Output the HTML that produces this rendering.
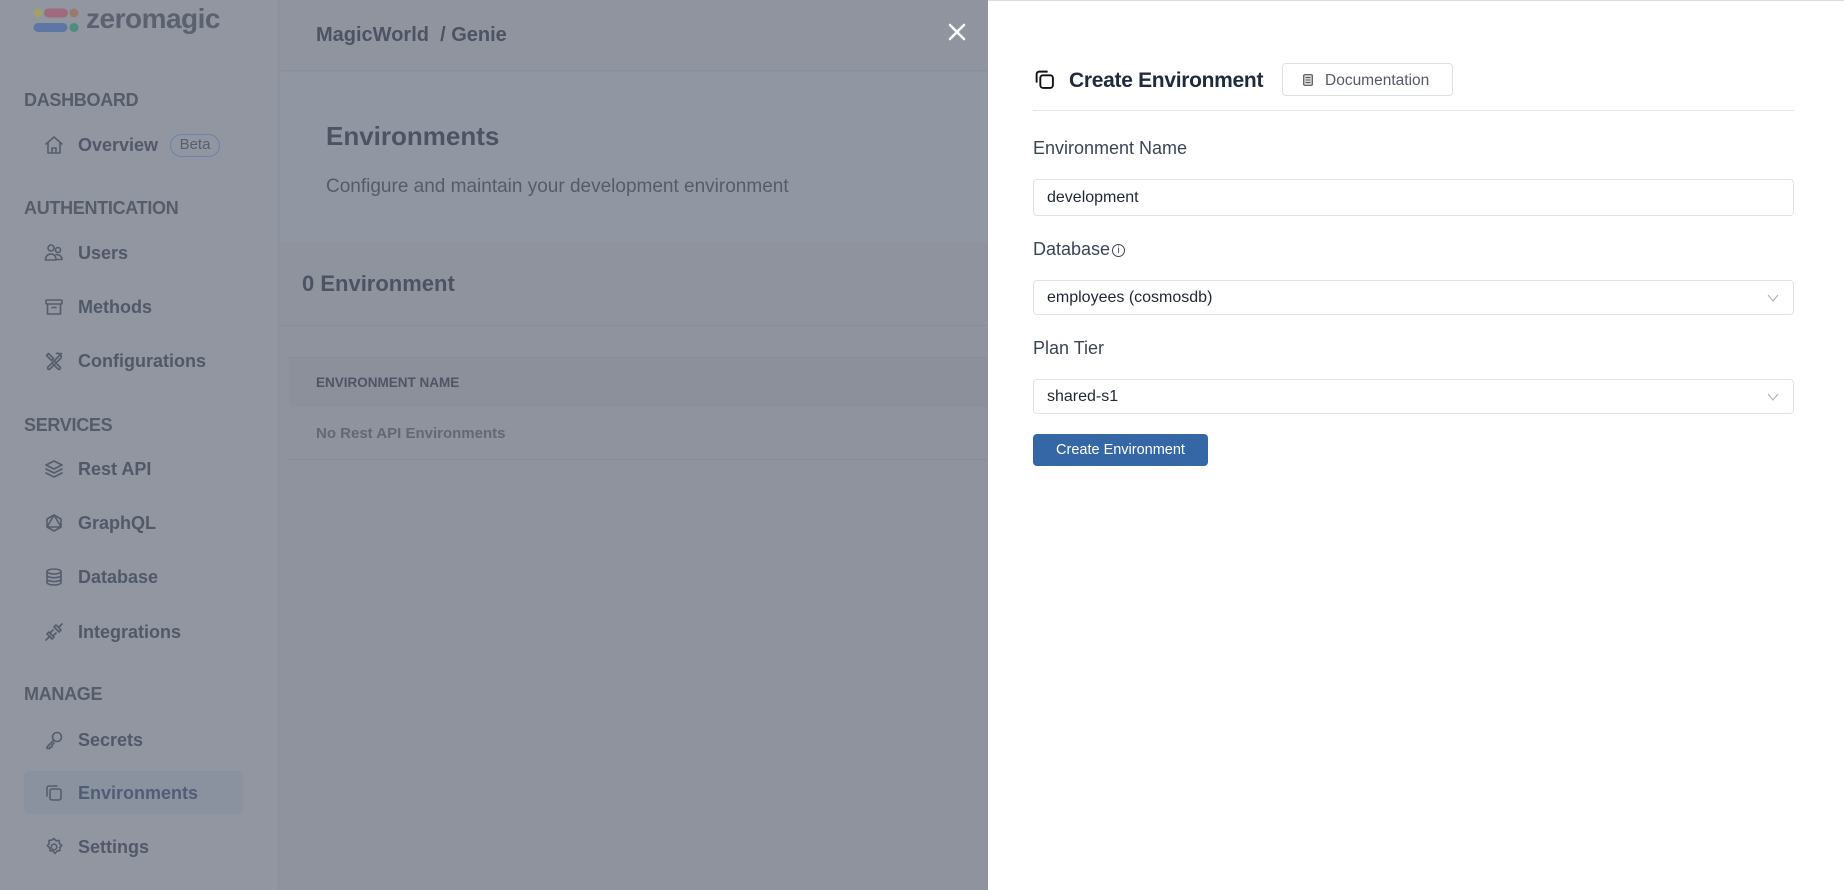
<!DOCTYPE html>
<html><head><meta charset="utf-8"><style>
*{box-sizing:border-box;margin:0;padding:0}
body{width:1844px;height:890px;overflow:hidden;font-family:"Liberation Sans",sans-serif;background:#8e939e;position:relative}
.a{position:absolute;white-space:nowrap}
.side{position:absolute;left:0;top:0;width:279px;height:890px;background:#9196a1;border-right:1px solid #8a909b}
.sec{position:absolute;left:24px;font-size:18px;color:#555c6a;font-weight:bold;letter-spacing:-0.3px}
.it{position:absolute;left:78px;font-size:18px;color:#515968;font-weight:bold;line-height:22px}
.ic{position:absolute;left:44px;width:20px;height:20px}
.ic *{fill:none;stroke:#555d6c;stroke-width:1.6;stroke-linecap:round;stroke-linejoin:round}
.main-t{color:#4c5362}
.lbl{position:absolute;left:1033px;font-size:18px;color:#3b4556}
.inp{position:absolute;left:1033px;width:761px;border:1px solid #dfe3e8;border-radius:4px;background:#fff;font-size:16px;color:#1f2733;padding-left:13px;display:flex;align-items:center}
.chev{position:absolute;right:14px;top:50%;width:12px;height:8px;margin-top:-4px}
</style></head><body>
<div class="side">
  <svg class="a" style="left:33px;top:8px" width="48" height="26" viewBox="0 0 48 26">
    <circle cx="5" cy="5" r="4.5" fill="#a3a06a"/>
    <rect x="11" y="0.5" width="24" height="9" rx="4.5" fill="#9e6b7e"/>
    <circle cx="41" cy="5" r="4.5" fill="#9a7a6e"/>
    <rect x="0.5" y="15" width="34" height="9" rx="4.5" fill="#5e76a4"/>
    <circle cx="41" cy="19.5" r="4.5" fill="#4f8a83"/>
  </svg>
  <div class="a" style="left:86px;top:3px;font-size:28px;color:#5b6170;font-weight:bold;letter-spacing:-0.5px">zeromagic</div>
  <div class="sec" style="top:90px">DASHBOARD</div>
  <svg class="ic" style="top:135px" viewBox="0 0 20 20"><path d="M2 9L10 2l8 7M4 7.5V18h12V7.5M8 18v-5h4v5"/></svg>
  <div class="it" style="top:134px">Overview</div>
  <div class="a" style="left:170px;top:134px;height:23px;width:50px;border:1.3px solid #6a84ae;border-radius:12px;font-size:15px;color:#566073;text-align:center;line-height:20px">Beta</div>
  <div class="sec" style="top:198px">AUTHENTICATION</div>
  <svg class="ic" style="top:243px" viewBox="0 0 20 20"><circle cx="7" cy="5" r="3"/><circle cx="14" cy="7" r="2.5"/><path d="M1.5 17c0-4 2.5-6 5.5-6s5 2 5 6zM12 11.5c3 0 6 1.5 6 5h-5"/></svg>
  <div class="it" style="top:242px">Users</div>
  <svg class="ic" style="top:297px" viewBox="0 0 20 20"><rect x="2" y="3" width="16" height="4" rx="1"/><path d="M3.5 7v10h13V7M8 10.5h4"/></svg>
  <div class="it" style="top:296px">Methods</div>
  <svg class="ic" style="top:351px" viewBox="0 0 20 20"><path d="M2.5 4.5l2-2 5 5-2 2zM10 10l6 6a1.4 1.4 0 01-2 2l-6-6M12.5 2.5a3.5 3.5 0 014.5 4.5l-11 11a1.4 1.4 0 01-2-2l11-11a3.5 3.5 0 012.5-2.5"/></svg>
  <div class="it" style="top:350px">Configurations</div>
  <div class="sec" style="top:415px">SERVICES</div>
  <svg class="ic" style="top:459px" viewBox="0 0 20 20"><path d="M10 2l8 4-8 4-8-4zM2 10l8 4 8-4M2 14l8 4 8-4"/></svg>
  <div class="it" style="top:458px">Rest API</div>
  <svg class="ic" style="top:513px" viewBox="0 0 20 20"><path d="M10 2L17 6v8l-7 4-7-4V6zM10 2L3 14h14z"/></svg>
  <div class="it" style="top:512px">GraphQL</div>
  <svg class="ic" style="top:567px" viewBox="0 0 20 20"><ellipse cx="10" cy="4.5" rx="7" ry="2.5"/><path d="M3 4.5v11c0 1.4 3 2.5 7 2.5s7-1.1 7-2.5v-11M3 8.2c0 1.4 3 2.5 7 2.5s7-1.1 7-2.5M3 12c0 1.4 3 2.5 7 2.5s7-1.1 7-2.5"/></svg>
  <div class="it" style="top:566px">Database</div>
  <svg class="ic" style="top:622px" viewBox="0 0 20 20"><path d="M2 18l4-4M5 10l5 5-2 2-5-5zM10 5l5 5 2-2-5-5zM18 2l-3 3M9 8l-2 2M12 11l-2 2"/></svg>
  <div class="it" style="top:621px">Integrations</div>
  <div class="sec" style="top:684px">MANAGE</div>
  <svg class="ic" style="top:730px" viewBox="0 0 20 20"><circle cx="13" cy="7" r="4.5"/><path d="M10 10l-7 7v1.5h3V17h2v-2l2-2"/></svg>
  <div class="it" style="top:729px">Secrets</div>
  <div class="a" style="left:24px;top:771px;width:219px;height:43px;background:#8b929f;border-radius:6px"></div>
  <svg class="ic" style="top:783px" viewBox="0 0 20 20"><rect x="6" y="6" width="11" height="11" rx="2"/><path d="M13 3H5a2 2 0 00-2 2v8"/></svg>
  <div class="it" style="top:782px;color:#4f5d75">Environments</div>
  <svg class="ic" style="top:837px" viewBox="0 0 20 20"><circle cx="10" cy="10" r="2.8"/><path d="M10 1.5l2 2.3 3-.4.4 3 2.3 2-2 2.2.3 3-3 .5-2 2.3-2-2.3-3-.4-.4-3-2.3-2 2-2.2-.4-3 3-.4z"/></svg>
  <div class="it" style="top:836px">Settings</div>
</div>
<div class="a" style="left:280px;top:0;width:708px;height:71px;background:#8f949f;border-bottom:1px solid #8a8f9a"></div>
<div class="a main-t" style="left:316px;top:24px;font-size:20px;font-weight:bold">MagicWorld&nbsp; / Genie</div>
<div class="a" style="left:280px;top:72px;width:708px;height:170px;background:#9197a2"></div>
<div class="a main-t" style="left:326px;top:121px;font-size:26px;font-weight:bold">Environments</div>
<div class="a" style="left:326px;top:176px;font-size:19px;color:#555c69">Configure and maintain your development environment</div>
<div class="a main-t" style="left:302px;top:271px;font-size:22px;font-weight:bold">0 Environment</div>
<div class="a" style="left:280px;top:325px;width:708px;height:1px;background:#878c97"></div>
<div class="a" style="left:289px;top:357px;width:699px;height:50px;background:#8b909b;border-top:1px solid #888e99"></div>
<div class="a" style="left:316px;top:375px;font-size:13.5px;color:#4e5564;font-weight:bold">ENVIRONMENT NAME</div>
<div class="a" style="left:316px;top:425px;font-size:15px;color:#626876;font-weight:bold">No Rest API Environments</div>
<div class="a" style="left:289px;top:459px;width:699px;height:1px;background:#888d98"></div>
<svg class="a" style="left:948px;top:23px" width="18" height="18" viewBox="0 0 18 18"><path d="M2 2l14 14M16 2L2 16" stroke="#fff" stroke-width="2.6" stroke-linecap="round"/></svg>
<div class="a" style="left:988px;top:0;width:856px;height:890px;background:#fff;border-top:1px solid #dcdcdc"></div>
<svg class="a" style="left:1034px;top:69px" width="21" height="21" viewBox="0 0 20 20"><rect x="6" y="6" width="12" height="12" rx="2.5" fill="none" stroke="#111" stroke-width="1.8"/><path d="M13 2.5H5A2.5 2.5 0 002.5 5v8" fill="none" stroke="#111" stroke-width="1.8"/></svg>
<div class="a" style="left:1069px;top:69px;font-size:21px;font-weight:bold;color:#1f2a3c;letter-spacing:-0.3px">Create Environment</div>
<div class="a" style="left:1282px;top:63px;width:171px;height:33px;border:1px solid #dde1e6;border-radius:4px"></div>
<svg class="a" style="left:1303px;top:74px" width="10" height="12" viewBox="0 0 10 12"><rect x="0.7" y="0.7" width="8.6" height="10.6" rx="1" fill="#ddd" stroke="#555" stroke-width="1.2"/><path d="M2.5 3.5h5M2.5 6h5M2.5 8.5h5" stroke="#555" stroke-width="1"/></svg>
<div class="a" style="left:1325px;top:72px;font-size:15.5px;color:#555b66">Documentation</div>
<div class="a" style="left:1033px;top:110px;width:761px;height:1px;background:#e3e5e8"></div>
<div class="lbl" style="top:138px">Environment Name</div>
<div class="inp" style="top:179px;height:37px">development</div>
<div class="lbl" style="top:239px">Database<span style="border:1.3px solid #3b4556;border-radius:50%;display:inline-block;width:13px;height:13px;line-height:11px;text-align:center;font-size:10px;vertical-align:2px;margin-left:2px">i</span></div>
<div class="inp" style="top:280px;height:35px">employees (cosmosdb)<svg class="chev" viewBox="0 0 12 8"><path d="M1 1l5 6 5-6" fill="none" stroke="#aaa" stroke-width="1"/></svg></div>
<div class="lbl" style="top:338px">Plan Tier</div>
<div class="inp" style="top:379px;height:35px">shared-s1<svg class="chev" viewBox="0 0 12 8"><path d="M1 1l5 6 5-6" fill="none" stroke="#aaa" stroke-width="1"/></svg></div>
<div class="a" style="left:1033px;top:434px;width:175px;height:32px;background:#3566a6;border-radius:4px;color:#fff;font-size:14.5px;text-align:center;line-height:32px">Create Environment</div>
</body></html>
